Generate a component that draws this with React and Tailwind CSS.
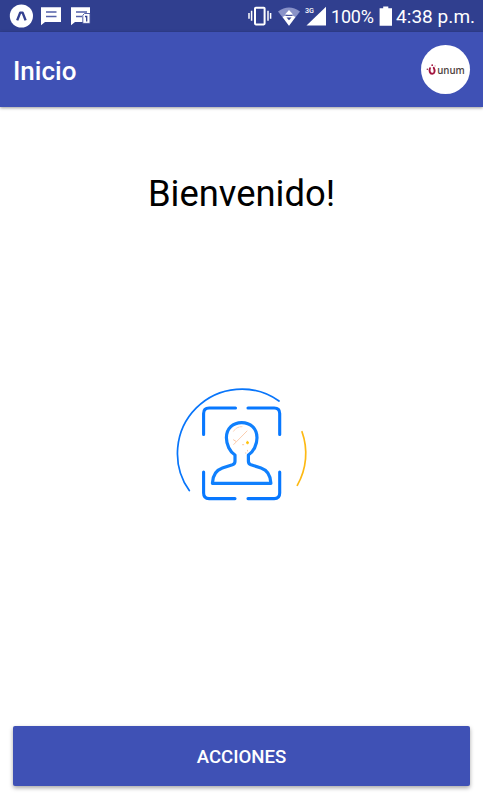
function NotificationIcons() {
  return (
    <svg width="84" height="32" viewBox="0 0 84 32" className="ml-[9px] shrink-0">
      <circle cx="12.4" cy="16" r="11.6" fill="#fff" />
      <path d="M8.2 20.4 11.2 12.6H13.6L16.6 20.4" fill="none" stroke="#33408f" strokeWidth="2.4" strokeLinejoin="round" />

      <path d="M32 7.3H52V22H36L32 25.2Z" fill="#fff" />
      <path d="M37 12H47.5M37 16.5H47.5" stroke="#5360a8" strokeWidth="1.3" />

      <path d="M62 7.3H81V22H66L62 25.2Z" fill="#fff" />
      <path d="M67 12H78M67 16.5H73" stroke="#5360a8" strokeWidth="1.3" />
      <path d="M75.5 13.5H81V23.4H73.8V15.2Z" fill="#fff" stroke="#44509c" strokeWidth="0.9" />
      <path d="M76 16.5H77.7V21.5" fill="none" stroke="#33408f" strokeWidth="1.3" />
    </svg>
  )
}

function SignalIcons() {
  return (
    <svg width="80" height="32" viewBox="0 0 80 32" className="shrink-0">
      {/* vibrate */}
      <rect x="8" y="7.8" width="9.6" height="16.6" rx="0.8" fill="none" stroke="#fff" strokeWidth="2" />
      <path d="M4.6 10.8V20.8M2 13V18.8M21 10.8V20.8M23.6 13V18.8" stroke="#fff" strokeWidth="1.5" />

      {/* wifi with traffic arrows */}
      <path d="M31 11.5Q42 3.5 53 11.5L42 25.8Z" fill="#8992c8" />
      <path d="M35.6 17Q42 11.8 48.4 17L42 25.8Z" fill="#fff" />
      <path d="M42 10 46 14.4H38Z" fill="#fff" />
      <path d="M38.5 15.5H45.5" stroke="#33408f" strokeWidth="0.9" />
      <path d="M39.5 17.6H44.5L42 20.3Z" fill="#33408f" />

      <text x="58" y="12.9" fill="#fff" fontSize="7.8" fontWeight="500" fontFamily="Roboto, sans-serif" textLength="9" lengthAdjust="spacingAndGlyphs">
        3G
      </text>
      <path d="M79 6.8V25.6H59.5Z" fill="#fff" />
    </svg>
  )
}

function StatusBar() {
  return (
    <div className="flex h-8 items-center bg-[#303f8f] text-white">
      <NotificationIcons />
      <div className="ml-auto flex items-center pr-2">
        <SignalIcons />
        <span className="ml-1 w-[44px] whitespace-nowrap pt-0.5 text-[18px] leading-8 tracking-[-0.2px]">100%</span>
        <svg width="14" height="32" viewBox="0 0 14 32" className="ml-[4px] shrink-0">
          <path d="M4.2 6.4H9.3V8.2H13V25.8H0.6V8.2H4.2Z" fill="#fff" />
        </svg>
        <span className="ml-[3px] w-[79px] whitespace-nowrap pt-0.5 text-[19px] leading-8 tracking-[0.05px]">4:38 p.m.</span>
      </div>
    </div>
  )
}

function Logo() {
  return (
    <div className="flex size-[49px] items-center rounded-full bg-white">
      <svg width="49" height="49" viewBox="0 0 49 49">
        <path d="M9 23.2C8 25.5 8.7 28.8 11.2 28.8C13.7 28.8 14.3 25.6 12.7 22.8" fill="none" stroke="#a31540" strokeWidth="1.9" strokeLinecap="round" />
        <circle cx="11.2" cy="20.2" r="0.9" fill="#a31540" />
        <circle cx="6.3" cy="24.2" r="0.7" fill="#7c1835" />
        <circle cx="14.1" cy="20.9" r="0.6" fill="#d28a9d" />
        <text x="16.2" y="29" fill="#4d4140" fontSize="10.5" fontWeight="600" fontFamily="'Open Sans', sans-serif" textLength="27.6" lengthAdjust="spacingAndGlyphs">
          unum
        </text>
      </svg>
    </div>
  )
}

function FaceScan() {
  return (
    <svg width="155" height="140" viewBox="0 0 155 140" fill="none" strokeLinecap="round" strokeLinejoin="round">
      <path d="M24.3 115.6A64.3 64.3 0 0 1 114 26" stroke="#0875fa" strokeWidth="1.7" />
      <path d="M137 56.7A64.3 64.3 0 0 1 132.3 110.3" stroke="#fdb913" strokeWidth="1.7" />
      <g stroke="#0878ff" strokeWidth="3.1">
        <path d="M38.6 59.5V38.5Q38.6 33 44.1 33H70.5" />
        <path d="M83 33H109.2Q114.7 33 114.7 38.5V59.5" />
        <path d="M38.6 97V118Q38.6 123.6 44.1 123.6H70" />
        <path d="M83 123.6H109.2Q114.7 123.6 114.7 118V97" />
      </g>
      {/* head and shoulders, open at the neck */}
      <path
        d="M70 80C64.8 76.8 61.4 69.5 61.4 62.8C61.4 53.5 68 47.6 76.7 47.6S92 53.5 92 62.8C92 69.5 88.6 76.8 83.4 80V86.2C83.4 87.9 84.3 89.2 86 89.8L96 93C102.5 95.2 105.6 99.5 105.9 108.3H47.4C47.7 99.5 50.9 95.2 57.4 93L67.4 89.8C69.1 89.2 70 87.9 70 86.2Z"
        stroke="#1080fd"
        strokeWidth="3.2"
      />
      {/* hairline highlights on the face */}
      <path d="M68.7 69.5 82 56" stroke="#f9c09a" strokeWidth="0.8" />
      <path d="M68.6 56.2Q71.5 51.6 77 51.7" stroke="#f8c5a5" strokeWidth="0.8" strokeDasharray="3 1.2" />
      <path d="M68.5 64.8 70.7 66.2M77.5 69.7H78.7M80.5 78H81M82.5 75.3V76" stroke="#f9c09a" strokeWidth="0.9" />
      <path d="M82.5 66.2 83.2 67.1 84 67.7 83.2 68.3 82.5 69.2 81.8 68.3 81 67.7 81.8 67.1Z" fill="#ffc107" stroke="#ffc107" strokeWidth="0.7" />
    </svg>
  )
}

export default function App() {
  return (
    <div className="flex h-[800px] w-[483px] flex-col overflow-hidden bg-white font-[Roboto,sans-serif]">
      <StatusBar />
      <header className="flex h-[75px] shrink-0 items-center justify-between bg-[#3f51b5] pr-[13px] pl-[13px] shadow-[0_1px_3px_rgba(0,0,0,0.4)]">
        <h1 className="pt-[3px] text-[26px] leading-8 font-medium text-white">Inicio</h1>
        <Logo />
      </header>

      <main className="flex flex-1 flex-col items-center">
        <p className="mt-[65px] text-[36.4px] leading-[44px] text-black">Bienvenido!</p>
        <div className="mt-[159px] pl-[2px]">
          <FaceScan />
        </div>
      </main>

      <div className="px-[13.4px] pb-[14px]">
        <button
          type="button"
          className="h-[60px] w-full rounded-[2px] bg-[#3f51b5] pt-1 text-[18.6px] font-medium text-white shadow-[0_2px_4px_rgba(0,0,0,0.35)]"
        >
          ACCIONES
        </button>
      </div>
    </div>
  )
}
